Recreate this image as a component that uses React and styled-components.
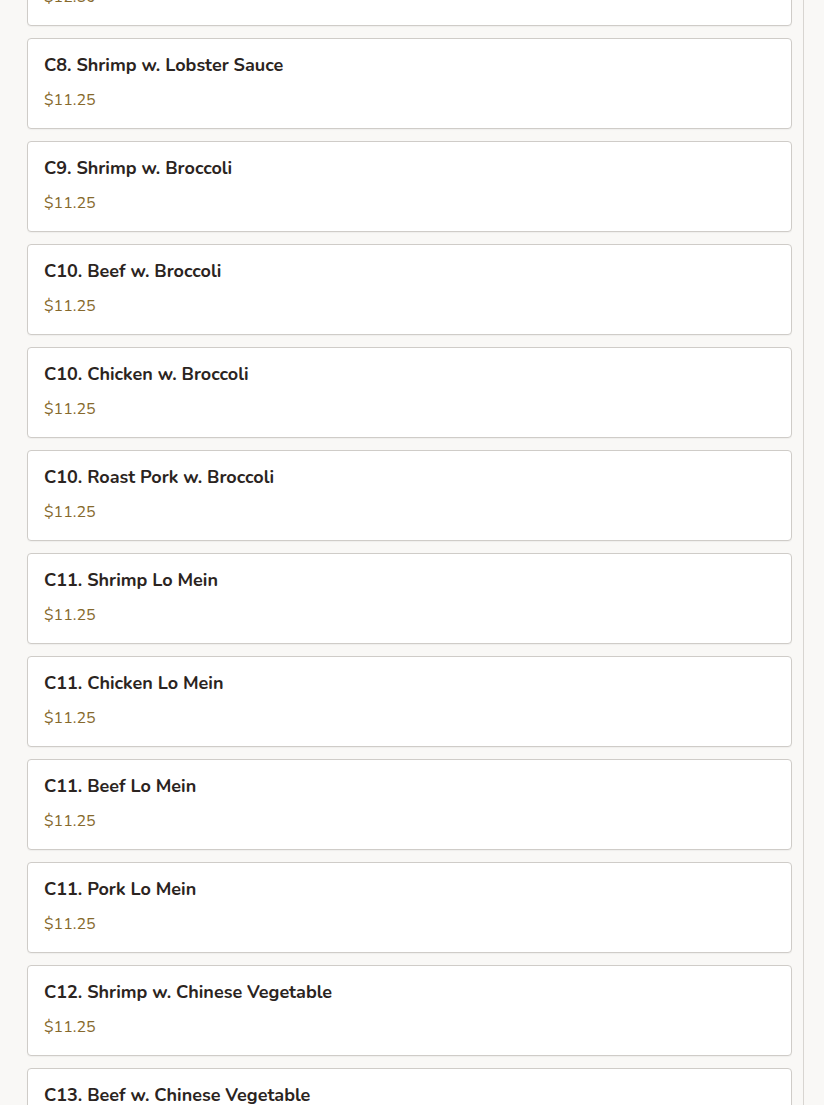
import React from 'react'
import styled, { createGlobalStyle } from 'styled-components'

const items = [
  { name: 'C7. Shrimp w. Mixed Vegetable', price: '$12.50' },
  { name: 'C8. Shrimp w. Lobster Sauce', price: '$11.25' },
  { name: 'C9. Shrimp w. Broccoli', price: '$11.25' },
  { name: 'C10. Beef w. Broccoli', price: '$11.25' },
  { name: 'C10. Chicken w. Broccoli', price: '$11.25' },
  { name: 'C10. Roast Pork w. Broccoli', price: '$11.25' },
  { name: 'C11. Shrimp Lo Mein', price: '$11.25' },
  { name: 'C11. Chicken Lo Mein', price: '$11.25' },
  { name: 'C11. Beef Lo Mein', price: '$11.25' },
  { name: 'C11. Pork Lo Mein', price: '$11.25' },
  { name: 'C12. Shrimp w. Chinese Vegetable', price: '$11.25' },
  { name: 'C13. Beef w. Chinese Vegetable', price: '$11.25' },
]

const App = () => (
  <>
    <GlobalStyle />
    <Root>
      <List>
        {items.map((item, i) => (
          <Card key={i}>
            <Title>{item.name}</Title>
            <Price>{item.price}</Price>
          </Card>
        ))}
      </List>
    </Root>
  </>
)

export default App

// #region styled-components
const GlobalStyle = createGlobalStyle`
  html, body {
    margin: 0;
    padding: 0;
    background: #f9f8f6;
    overflow: hidden;
  }
`

const Root = styled.div`
  width: 804px;
  height: 1105px;
  box-sizing: border-box;
  border-right: 1px solid #d8d5d1;
  padding: 0 11px 0 27px;
  overflow: hidden;
  font-family: 'Nunito', Lato, 'Open Sans', sans-serif;
`

const List = styled.div`
  display: flex;
  flex-direction: column;
  gap: 12px;
  margin-top: -65px;
`

const Card = styled.div`
  display: flex;
  flex-direction: column;
  gap: 12px;
  background: #fff;
  border: 1px solid #cfccc8;
  border-radius: 4px;
  padding: 14px 16px 17px;
  box-shadow: 0 1px 1px rgba(0, 0, 0, 0.04);
`

const Title = styled.span`
  color: #2b2421;
  font-size: 18px;
  font-weight: 700;
  line-height: 24px;
`

const Price = styled.span`
  color: #86692c;
  font-size: 16px;
  line-height: 22px;
`
// #endregion
